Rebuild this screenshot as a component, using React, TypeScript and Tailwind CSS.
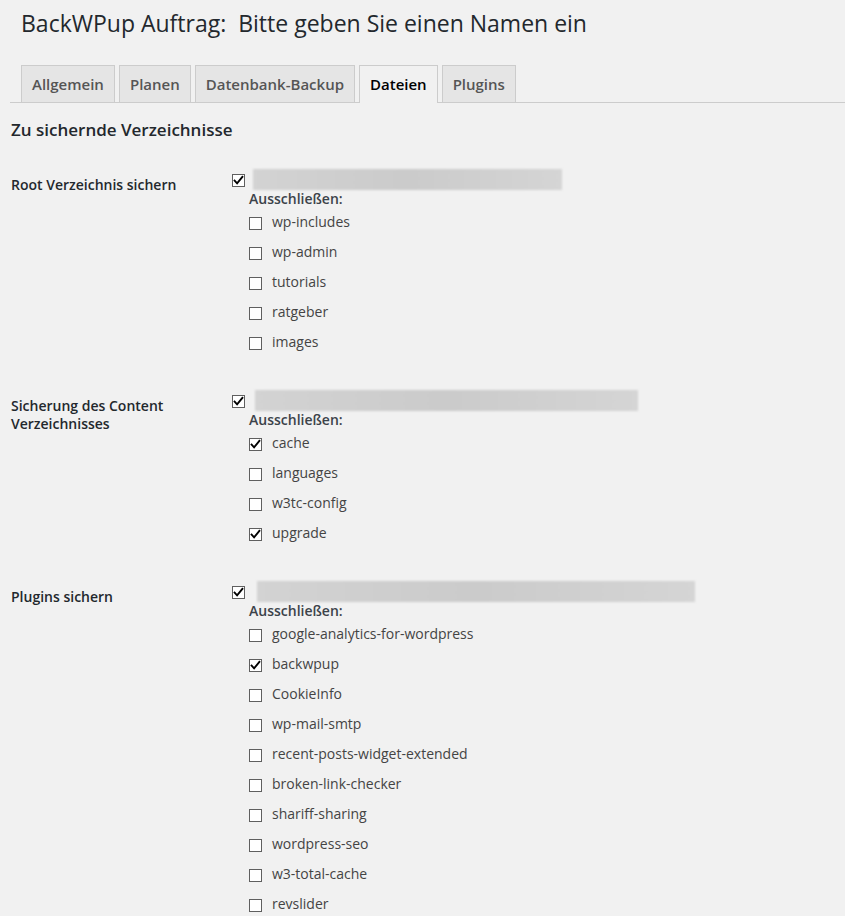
import React from 'react';

interface Section {
  label: string;
  barOffset: string;
  barWidth: string;
  items: { name: string; checked?: boolean }[];
}

const sections: Section[] = [
  {
    label: 'Root Verzeichnis sichern',
    barOffset: 'ml-[8px]',
    barWidth: 'w-[309px]',
    items: [{ name: 'wp-includes' }, { name: 'wp-admin' }, { name: 'tutorials' }, { name: 'ratgeber' }, { name: 'images' }],
  },
  {
    label: 'Sicherung des Content Verzeichnisses',
    barOffset: 'ml-[10px]',
    barWidth: 'w-[383px]',
    items: [
      { name: 'cache', checked: true },
      { name: 'languages' },
      { name: 'w3tc-config' },
      { name: 'upgrade', checked: true },
    ],
  },
  {
    label: 'Plugins sichern',
    barOffset: 'ml-[12px]',
    barWidth: 'w-[438px]',
    items: [
      { name: 'google-analytics-for-wordpress' },
      { name: 'backwpup', checked: true },
      { name: 'CookieInfo' },
      { name: 'wp-mail-smtp' },
      { name: 'recent-posts-widget-extended' },
      { name: 'broken-link-checker' },
      { name: 'shariff-sharing' },
      { name: 'wordpress-seo' },
      { name: 'w3-total-cache' },
      { name: 'revslider' },
    ],
  },
];

const tabs = ['Allgemein', 'Planen', 'Datenbank-Backup', 'Dateien', 'Plugins'];

const CheckBox: React.FC<{ checked?: boolean; className?: string }> = ({ checked, className = '' }) => (
  <span
    className={`flex h-[13px] w-[13px] shrink-0 items-center justify-center border border-[#5f5f5f] bg-white ${className}`}
  >
    {checked && (
      <svg viewBox="0 0 11 11" className="h-[11px] w-[11px]">
        <path d="M1.6 5.6 L4.1 8.4 L9.4 1.8" fill="none" stroke="#000" strokeWidth={1.9} strokeLinecap="square" />
      </svg>
    )}
  </span>
);

export default function App() {
  return (
    <div className="min-h-screen bg-[#f1f1f1] pl-[10px] pt-[8px] font-['Open_Sans',sans-serif] text-[#444]">
      <h1 className="whitespace-pre pl-[11px] text-[23px] font-normal leading-[30px] text-[#23282d]">
        BackWPup Auftrag:  Bitte geben Sie einen Namen ein
      </h1>

      {/* Tabs */}
      <div className="mt-[27px] flex h-[38px] items-start gap-[4px] border-b border-[#ccc] pl-[11px]">
        {tabs.map((tab) => {
          const active = tab === 'Dateien';
          return (
            <div
              key={tab}
              className={`border border-b-0 border-[#ccc] px-[10px] pt-[6px] text-[15px] font-semibold leading-[24px] ${
                active ? 'h-[38px] bg-[#f1f1f1] text-black' : 'h-[37px] bg-[#e5e5e5] text-[#555]'
              }`}
            >
              {tab}
            </div>
          );
        })}
      </div>

      <h3 className="mt-[16px] pl-[1px] text-[17px] font-semibold leading-[21px] text-[#23282d]">
        Zu sichernde Verzeichnisse
      </h3>

      <div className="mt-[29px] flex flex-col gap-[38px]">
        {sections.map((s) => (
          <div key={s.label} className="flex">
            <div className="w-[222px] shrink-0 pl-[1px] pt-[7px]">
              <div className="w-[200px] text-[14px] font-semibold leading-[18.2px] text-[#23282d]">{s.label}</div>
            </div>
            <div className="flex flex-col">
              <div className="flex h-[21px] items-center">
                <CheckBox checked className="mt-[1px]" />
                <div
                  className={`h-[21px] ${s.barOffset} ${s.barWidth} bg-linear-to-r from-[#d3d3d3] via-[#cbcbcb] to-[#d5d5d5] blur-[1px]`}
                />
              </div>
              <div className="ml-[17px] text-[14px] font-semibold leading-[18px] text-[#3c434a]">Ausschließen:</div>
              <div className="ml-[17px] mt-[4px] flex flex-col gap-[10px]">
                {s.items.map((it) => (
                  <div key={it.name} className="flex items-start">
                    <CheckBox checked={it.checked} className="mt-[5px]" />
                    <span className="ml-[10px] text-[14px] leading-[20px] text-[#444]">{it.name}</span>
                  </div>
                ))}
              </div>
            </div>
          </div>
        ))}
      </div>
    </div>
  );
}
